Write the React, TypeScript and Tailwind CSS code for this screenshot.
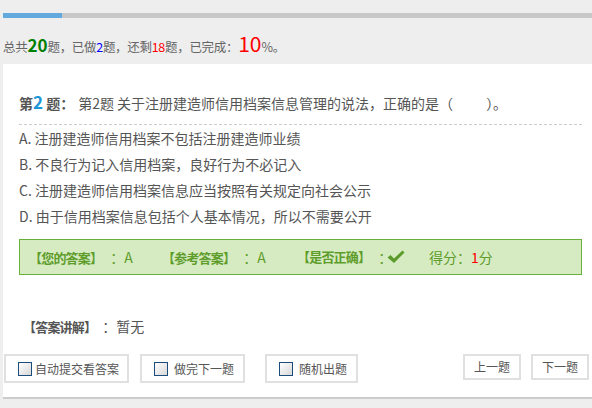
import React from "react";

const FONT = { fontFamily: '"Noto Sans CJK SC", "Noto Sans", sans-serif' };

function Check() {
  return (
    <svg width="18" height="14" viewBox="0 0 18 14" className="block">
      <path d="M0.5 7.5 L3.5 5 L7 8.5 L15.5 0.5 L17.5 2.5 L7 13 Z" fill="#5b9b2c" />
    </svg>
  );
}

function Box() {
  return (
    <span className="inline-block w-[14px] h-[14px] border-[1.5px] border-[#1c4c7c] bg-gradient-to-br from-white to-[#d8d8d8] shrink-0" />
  );
}

export default function App() {
  const options = [
    "A. 注册建造师信用档案不包括注册建造师业绩",
    "B. 不良行为记入信用档案，良好行为不必记入",
    "C. 注册建造师信用档案信息应当按照有关规定向社会公示",
    "D. 由于信用档案信息包括个人基本情况，所以不需要公开",
  ];
  return (
    <div style={FONT} className="w-[592px] h-[408px] bg-[#eeeeee] flex flex-col overflow-hidden text-[#555]">
      {/* progress */}
      <div className="pt-[13px] pl-[3px]">
        <div className="h-[5px] bg-[#c8c8c8]">
          <div className="h-full w-[59px] bg-[#62a9dd]" />
        </div>
      </div>

      {/* summary */}
      <div className="h-[46px] pl-[3px] pt-[13px] flex items-baseline text-[12.5px] text-[#666] leading-[24px] whitespace-pre tracking-[-0.3px]">
        <span>总共</span>
        <span className="text-[17px] font-bold text-[#008000] tracking-normal">20</span>
        <span>题，已做</span>
        <span className="text-[#0000ff]">2</span>
        <span>题，还剩</span>
        <span className="text-[#ff0000]">18</span>
        <span>题，已完成：</span>
        <span className="text-[21px] text-[#ff0000] tracking-normal">10</span>
        <span>%。</span>
      </div>

      {/* question card */}
      <div className="ml-[3px] h-[335px] bg-white border-b-2 border-[#cccccc] flex flex-col">
        <div className="pl-4 pr-[10px]">
          <div className="pt-[28px] pb-[11px] border-b border-dashed border-[#cccccc] text-[14px] leading-[20px] flex items-baseline whitespace-pre">
            <span className="font-bold">第</span>
            <span className="font-bold text-[17px] text-[#1b95d5]">2</span>
            <span className="font-bold"> 题：</span>
            <span className="ml-[4px]">第2题 关于注册建造师信用档案信息管理的说法，正确的是（</span>
            <span className="inline-block w-[33px]" />
            <span>）。</span>
          </div>
          <div className="text-[14px] leading-[26px]">
            {options.map((o) => (
              <div key={o}>{o}</div>
            ))}
          </div>
          <div className="mt-[10px] h-[36px] border border-[#6aae3b] bg-[#d7ebc2] flex items-center pl-[9px] text-[#5e9d2c] whitespace-pre">
            <div className="w-[133px] flex items-baseline">
              <span className="font-bold text-[13px] tracking-[-0.8px]">【您的答案】</span>
              <span className="ml-[8px] text-[14px]">：A</span>
            </div>
            <div className="w-[135px] flex items-baseline">
              <span className="font-bold text-[13px] tracking-[-0.8px]">【参考答案】</span>
              <span className="ml-[8px] text-[14px]">：A</span>
            </div>
            <div className="w-[132px] flex items-center">
              <span className="font-bold text-[13px] tracking-[-0.8px]">【是否正确】</span>
              <span className="ml-[8px] text-[14px]">：</span>
              <span className="-ml-[5px]"><Check /></span>
            </div>
            <div className="flex items-baseline text-[14px]">
              <span>得分：</span>
              <span className="text-[#ff0000]">1</span>
              <span>分</span>
            </div>
          </div>
        </div>

        <div className="mt-[41px] pl-[20px] leading-[20px] flex items-baseline">
          <span className="font-bold text-[13px] tracking-[-0.8px]">【答案讲解】</span>
          <span className="ml-[6px] text-[14px]">：暂无</span>
        </div>

        <div className="mt-[17px] pl-[1px] pr-[3px] flex items-start text-[12px] text-[#555]">
          <div className="w-[125px] h-[29px] border-2 border-[#e0e0e0] flex items-center pl-[12px]">
            <Box />
            <span className="ml-[3px]">自动提交看答案</span>
          </div>
          <div className="ml-[11px] w-[105px] h-[29px] border-2 border-[#e0e0e0] flex items-center pl-[12px]">
            <Box />
            <span className="ml-[6px]">做完下一题</span>
          </div>
          <div className="ml-[20px] w-[93px] h-[29px] border-2 border-[#e0e0e0] flex items-center pl-[12px]">
            <Box />
            <span className="ml-[6px]">随机出题</span>
          </div>
          <div className="ml-auto w-[58px] h-[26px] border-2 border-[#e0e0e0] flex items-center justify-center">
            上一题
          </div>
          <div className="ml-[10px] w-[58px] h-[26px] border-2 border-[#e0e0e0] flex items-center justify-center">
            下一题
          </div>
        </div>
      </div>
    </div>
  );
}
